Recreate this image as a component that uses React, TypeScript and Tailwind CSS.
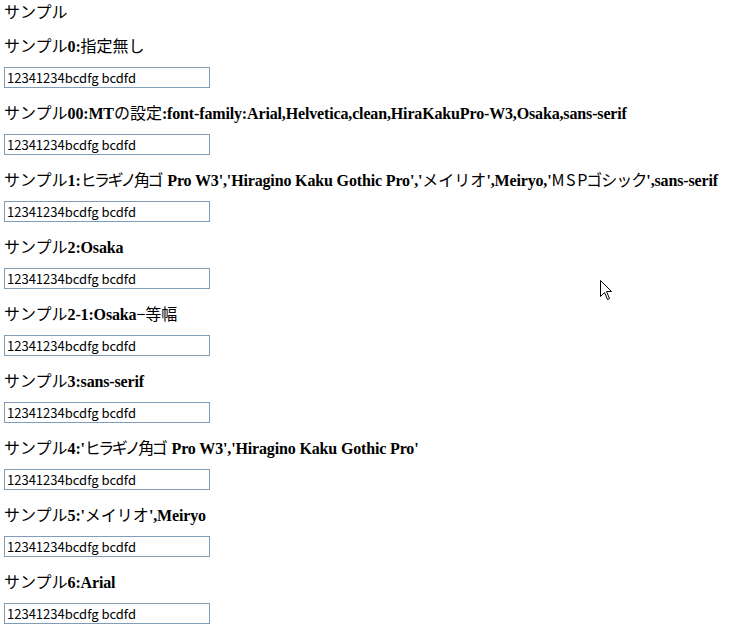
import React from "react";

type Seg = [string, "j" | "l" | "k" | "m"];

const J = "font-['Noto_Sans_CJK_JP',sans-serif] font-normal";
const K = "font-['Noto_Sans_CJK_JP',sans-serif] font-normal tracking-[-2.5px] mr-[2.5px]";
const M = "font-['Noto_Sans_CJK_JP',sans-serif] font-normal tracking-[-1px]";
const L = "font-['Liberation_Serif','Noto_Sans_CJK_JP',serif] font-bold tracking-[-0.15px]";

const cls = { j: J, k: K, m: M, l: L };

const headings: Seg[][] = [
  [["サンプル", "j"], ["0:", "l"], ["指定無し", "j"]],
  [["サンプル", "j"], ["00:MT", "l"], ["の設定", "j"], [":font-family:Arial,Helvetica,clean,HiraKakuPro-W3,Osaka,sans-serif", "l"]],
  [["サンプル", "j"], ["1:", "l"], ["ヒラギノ角ゴ", "k"], [" Pro W3','Hiragino Kaku Gothic Pro','", "l"], ["メイリオ", "j"], ["',Meiryo,'", "l"], ["M S Pゴシック", "m"], ["',sans-serif", "l"]],
  [["サンプル", "j"], ["2:Osaka", "l"]],
  [["サンプル", "j"], ["2-1:Osaka", "l"], ["−等幅", "j"]],
  [["サンプル", "j"], ["3:sans-serif", "l"]],
  [["サンプル", "j"], ["4:'", "l"], ["ヒラギノ角ゴ", "k"], [" Pro W3','Hiragino Kaku Gothic Pro'", "l"]],
  [["サンプル", "j"], ["5:'", "l"], ["メイリオ", "j"], ["',Meiryo", "l"]],
  [["サンプル", "j"], ["6:Arial", "l"]],
];

function Section({ segs }: { segs: Seg[] }) {
  return (
    <div className="flex flex-col">
      <div className="h-[46px] pt-[14px] text-[16px] leading-[20px] text-black whitespace-nowrap">
        {segs.map(([t, k], i) => (
          <span key={i} className={cls[k]}>
            {t}
          </span>
        ))}
      </div>
      <input
        readOnly
        defaultValue="12341234bcdfg bcdfd"
        className="h-[21px] w-[206px] border border-[#7f9db9] bg-white px-[2px] text-[13px] leading-[19px] text-black font-['Noto_Sans_CJK_JP',sans-serif] outline-none"
      />
    </div>
  );
}

export default function App() {
  return (
    <div className="relative min-h-[631px] w-[733px] overflow-hidden bg-white pl-[4px]">
      <div className={`h-[21px] pt-[1px] text-[16px] leading-[20px] text-black ${J}`}>サンプル</div>
      {headings.map((s, i) => (
        <Section key={i} segs={s} />
      ))}
      <svg
        className="absolute left-[600px] top-[280px]"
        width="13"
        height="21"
        viewBox="0 0 13 21"
      >
        <path
          d="M0.5 0.5 L0.5 16.5 L4.5 12.5 L7.5 19.5 L9.5 18.5 L6.5 11.5 L11.5 11.5 Z"
          fill="white"
          stroke="black"
          strokeWidth="1"
        />
      </svg>
    </div>
  );
}
